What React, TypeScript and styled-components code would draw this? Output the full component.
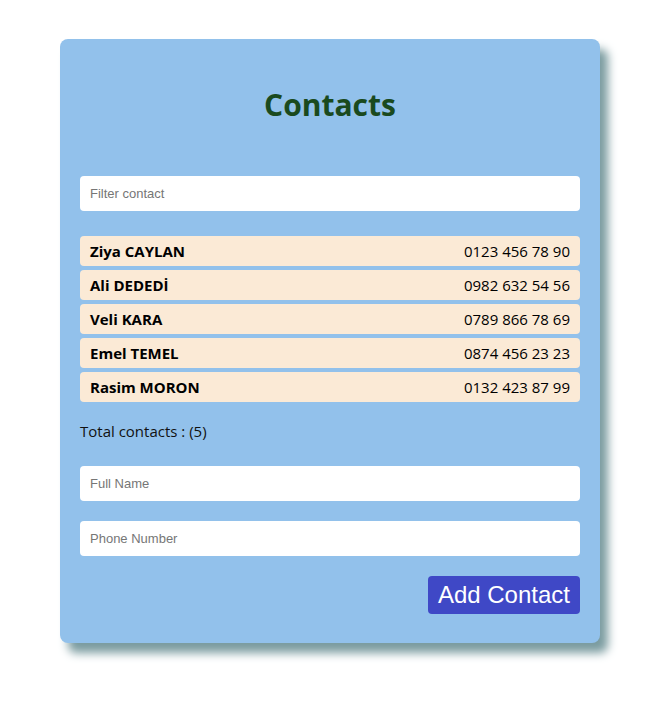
import styled, { createGlobalStyle } from "styled-components";

const contacts = [
  { name: "Ziya CAYLAN", phone: "0123 456 78 90" },
  { name: "Ali DEDEDİ", phone: "0982 632 54 56" },
  { name: "Veli KARA", phone: "0789 866 78 69" },
  { name: "Emel TEMEL", phone: "0874 456 23 23" },
  { name: "Rasim MORON", phone: "0132 423 87 99" },
];

const GlobalStyle = createGlobalStyle`
  body {
    margin: 0;
    background: #ffffff;
    font-family: "Open Sans", "Noto Sans", sans-serif;
  }
`;

const App = () => {
  return (
    <Page>
      <GlobalStyle />
      <Card>
        <Title>Contacts</Title>
        <Field placeholder="Filter contact" />
        <List>
          {contacts.map((c) => (
            <Row key={c.name}>
              <Name>{c.name}</Name>
              <Phone>{c.phone}</Phone>
            </Row>
          ))}
        </List>
        <Total>Total contacts : ({contacts.length})</Total>
        <Form>
          <Field placeholder="Full Name" />
          <Field placeholder="Phone Number" />
          <ButtonRow>
            <AddButton>Add Contact</AddButton>
          </ButtonRow>
        </Form>
      </Card>
    </Page>
  );
};

export default App;

const Page = styled.div`
  min-height: 714px;
  box-sizing: border-box;
  padding: 39px 48px 40px 60px;
`;

const Card = styled.div`
  width: 540px;
  box-sizing: border-box;
  padding: 0 20px 29px;
  background-color: #92c1eb;
  border-radius: 8px;
  box-shadow: 8px 10px 10px #7b9ca0;
  display: flex;
  flex-direction: column;
`;

const Title = styled.h1`
  margin: 46px 0 51px;
  height: 40px;
  line-height: 40px;
  text-align: center;
  font-size: 30px;
  font-weight: 700;
  color: #1a4a1e;
`;

const Field = styled.input`
  display: block;
  width: 100%;
  height: 35px;
  box-sizing: border-box;
  border: none;
  border-radius: 4px;
  padding: 0 10px;
  background: #ffffff;
  font-family: "Liberation Sans", Arial, sans-serif;
  font-size: 13px;
  outline: none;
  &::placeholder {
    color: #767676;
  }
`;

const List = styled.div`
  margin-top: 25px;
  display: flex;
  flex-direction: column;
  gap: 4px;
`;

const Row = styled.div`
  height: 30px;
  display: flex;
  align-items: center;
  justify-content: space-between;
  padding: 0 10px;
  background-color: #fbead6;
  border-radius: 4px;
  font-size: 15px;
  color: #000000;
`;

const Name = styled.span`
  font-weight: 700;
`;

const Phone = styled.span`
  font-weight: 400;
`;

const Total = styled.div`
  margin: 18px 0 24px;
  height: 22px;
  line-height: 22px;
  font-size: 15px;
  color: #111111;
`;

const Form = styled.div`
  display: flex;
  flex-direction: column;
  gap: 20px;
`;

const ButtonRow = styled.div`
  display: flex;
  justify-content: flex-end;
`;

const AddButton = styled.button`
  height: 38px;
  padding: 0 10px;
  border: none;
  border-radius: 4px;
  background-color: #3f48c6;
  color: #ffffff;
  font-family: "Liberation Sans", Arial, sans-serif;
  font-size: 24px;
  cursor: pointer;
`;
